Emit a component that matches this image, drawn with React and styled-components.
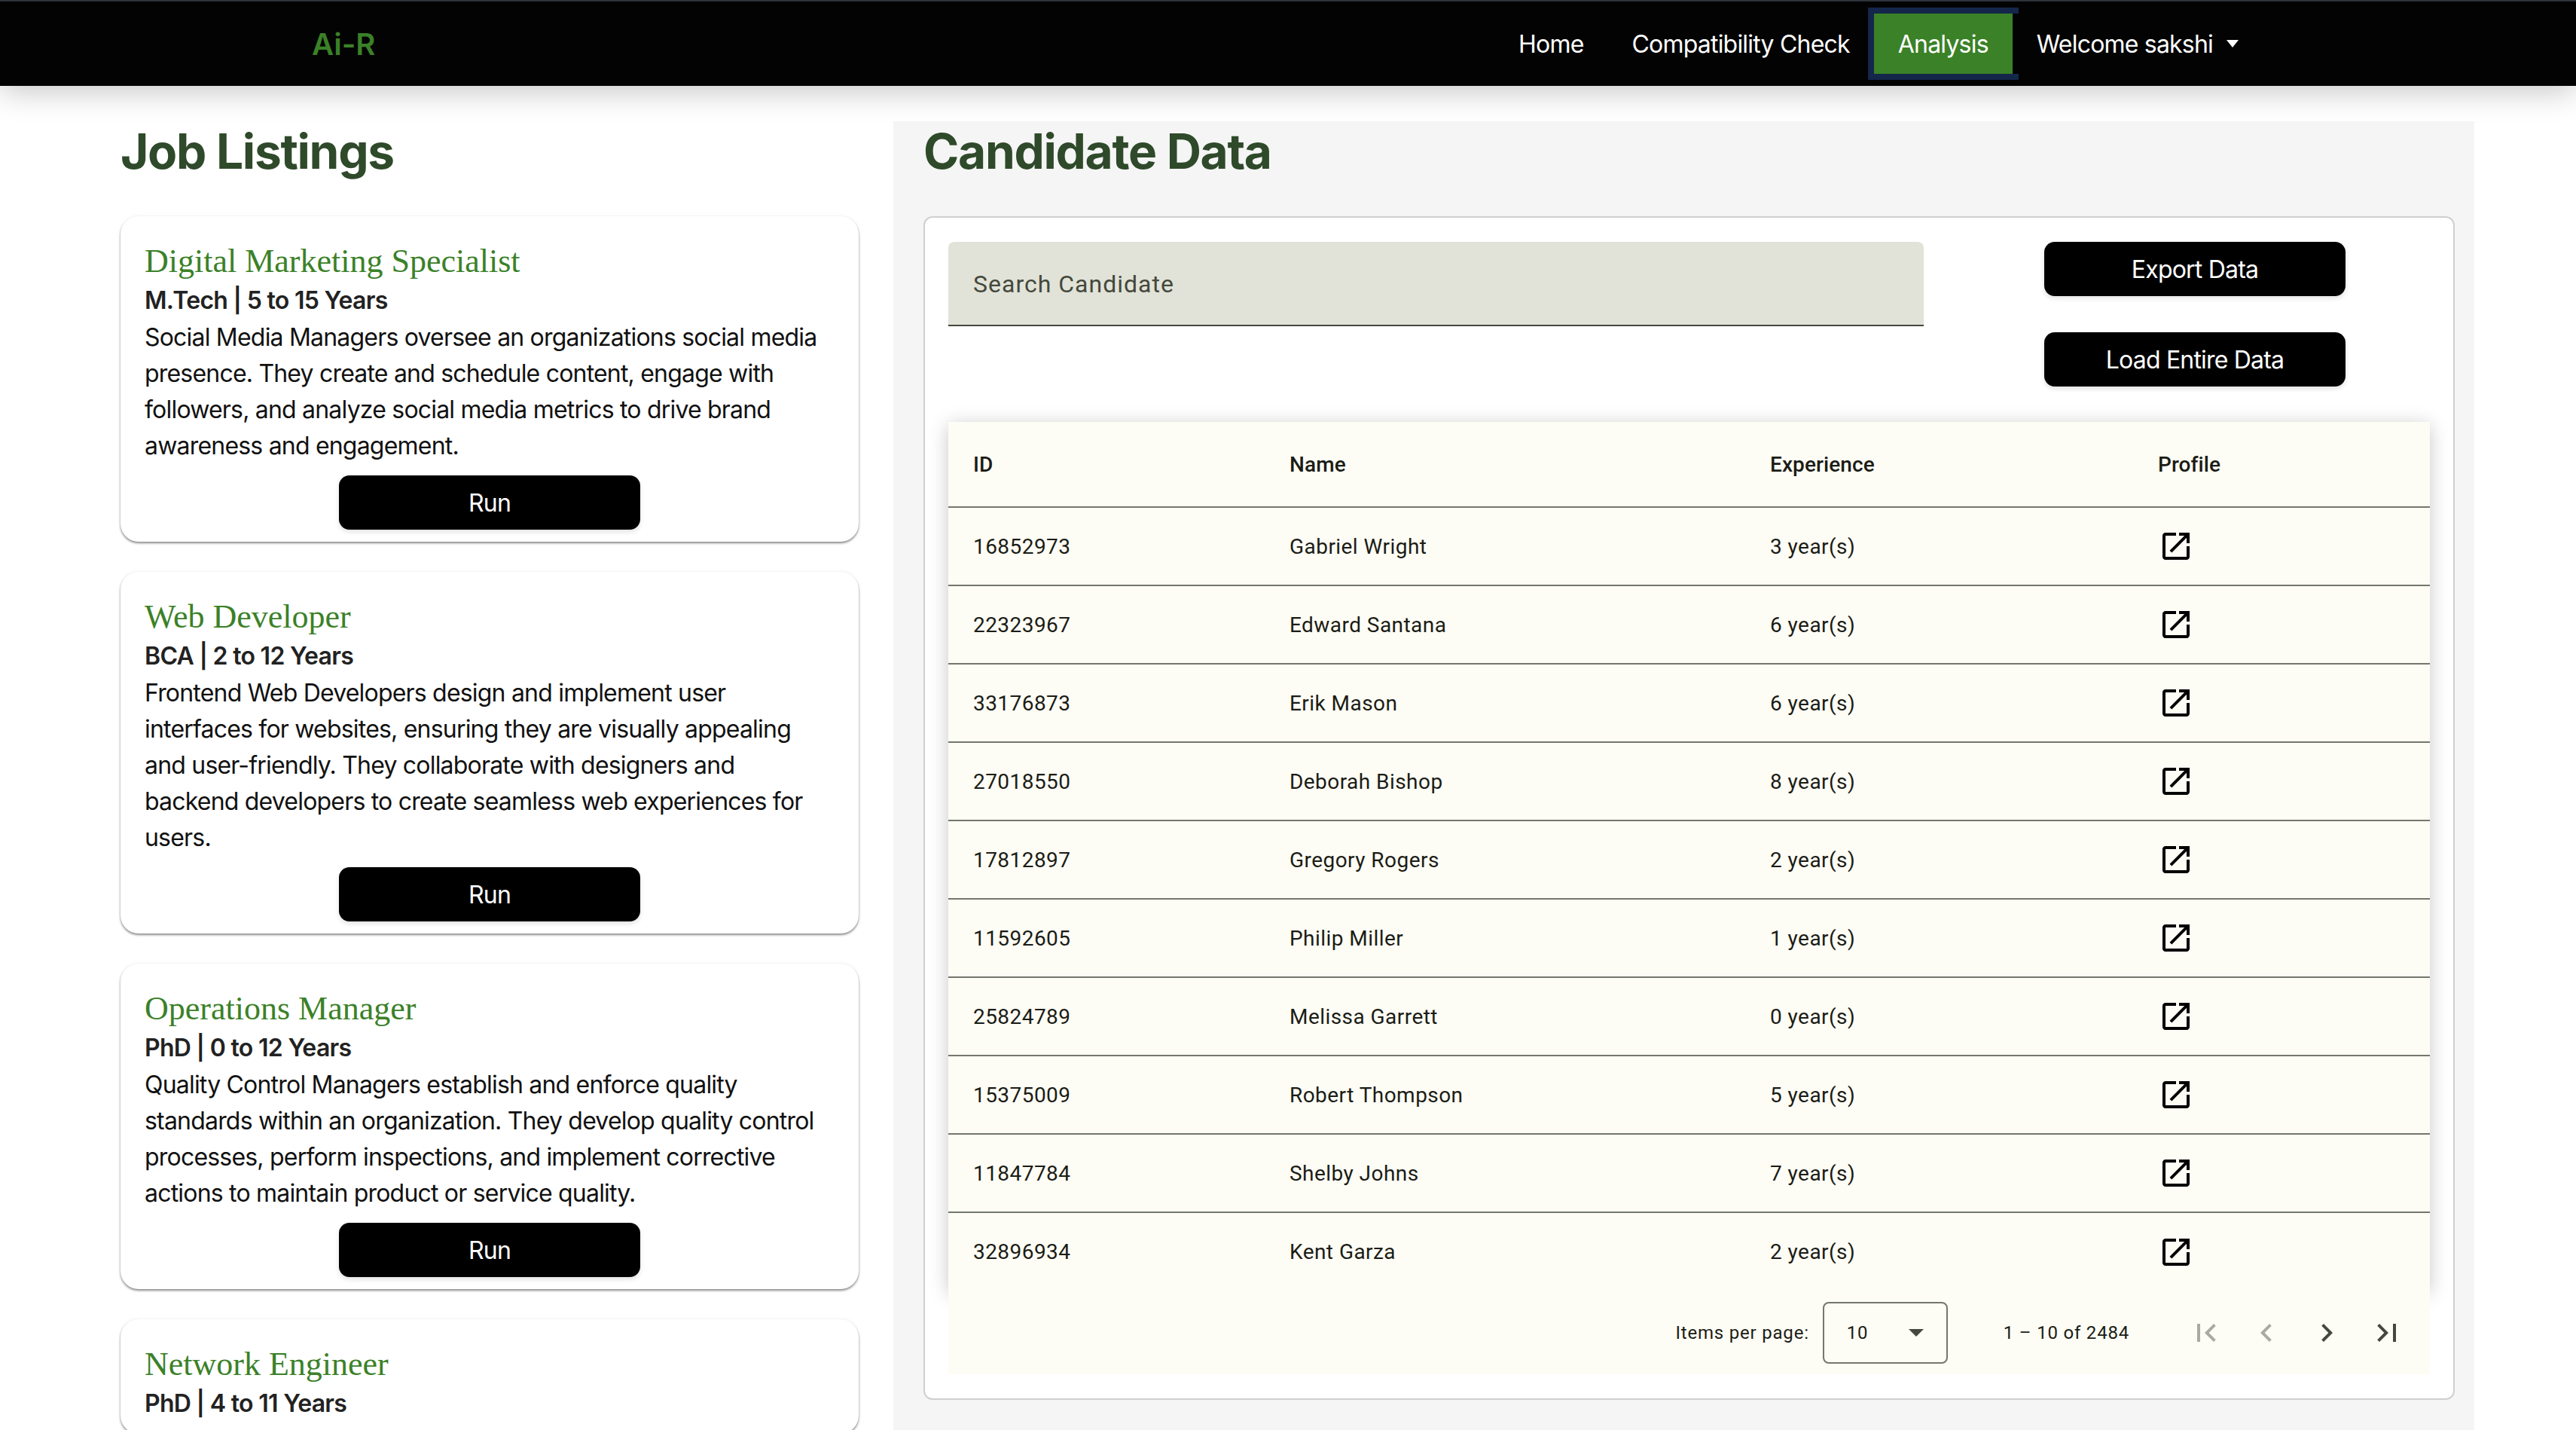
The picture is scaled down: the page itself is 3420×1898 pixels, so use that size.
import React from "react";
import styled, { createGlobalStyle } from "styled-components";

const GlobalStyle = createGlobalStyle`
  html, body {
    margin: 0;
    padding: 0;
    background: #fff;
    font-family: Inter, "Liberation Sans", sans-serif;
  }
  * {
    box-sizing: border-box;
  }
`;

const Page = styled.div`
  width: 3420px;
  height: 1898px;
  overflow: hidden;
  display: flex;
  flex-direction: column;
`;

const Navbar = styled.nav`
  height: 114px;
  flex: none;
  position: relative;
  z-index: 5;
  display: flex;
  align-items: center;
  justify-content: space-between;
  padding: 0 416px 0 414px;
  background: #030303;
  border-top: 2px solid #2e333b;
  box-shadow: 0 8px 40px rgba(0, 0, 0, 0.22);
`;

const Brand = styled.a`
  color: #3b8128;
  font-size: 40px;
  font-weight: 600;
`;

const NavLinks = styled.div`
  display: flex;
  align-items: center;
`;

/* the link after the active one sits on top and hides the right edge of the outline */
const NavLink = styled.a`
  position: relative;
  height: 80px;
  display: flex;
  align-items: center;
  padding: 0 32px;
  color: #fff;
  font-size: 32px;
  letter-spacing: -0.8px;
  background: ${props => (props.$active ? "#3b8128" : "#030303")};
  outline: ${props => (props.$active ? "8px solid #14264a" : "none")};
`;

const Caret = styled.span`
  margin-left: 18px;
  width: 0;
  height: 0;
  border-top: 10px solid #fff;
  border-left: 8px solid transparent;
  border-right: 8px solid transparent;
`;

const Main = styled.main`
  flex: 1;
  min-height: 0;
  display: flex;
  gap: 46px;
  padding: 47px 0 0 160px;
`;

const JobColumn = styled.section`
  width: 980px;
  flex: none;
`;

const Heading = styled.h1`
  margin: 0 0 46px;
  color: #2f4a2a;
  font-size: 64px;
  line-height: 80px;
  font-weight: 700;
  letter-spacing: -1.3px;
`;

const JobList = styled.div`
  display: flex;
  flex-direction: column;
  gap: 40px;
`;

const JobCard = styled.article`
  padding: 32px 32px 16px;
  border-radius: 24px;
  background: #fff;
  box-shadow: 0 2px 3px rgba(0, 0, 0, 0.45), 0 0 6px rgba(0, 0, 0, 0.05);
`;

const JobTitle = styled.h2`
  margin: 0;
  color: #3b8128;
  font-family: "Liberation Serif", serif;
  font-size: 44px;
  line-height: 56px;
  font-weight: 400;
`;

const JobMeta = styled.div`
  color: #222;
  font-size: 32px;
  line-height: 48px;
  font-weight: 600;
  letter-spacing: -0.7px;
`;

const JobText = styled.p`
  max-width: 905px;
  margin: 0 0 15px;
  padding-top: 1px;
  color: #111;
  font-size: 32px;
  line-height: 48px;
  letter-spacing: -0.8px;
`;

const BlackButton = styled.button`
  display: block;
  width: 400px;
  height: 72px;
  margin: ${props => (props.$centered ? "0 auto" : "0")};
  border: 0;
  border-radius: 14px;
  background: #000;
  color: #fff;
  font-family: Inter, "Liberation Sans", sans-serif;
  font-size: 32px;
  letter-spacing: -0.8px;
  box-shadow: 0 3px 6px rgba(0, 0, 0, 0.12);
`;

const DataPanel = styled.section`
  width: 2099px;
  flex: none;
  padding: 0 26px 0 40px;
  background: #f5f5f5;
`;

const DataCard = styled.div`
  height: 1571px;
  padding: 32px 31px;
  border: 2px solid #cfcfcf;
  border-radius: 12px;
  background: #fff;
`;

const Toolbar = styled.div`
  height: 239px;
  display: flex;
  align-items: flex-start;
`;

const SearchBox = styled.div`
  width: 1295px;
  height: 112px;
  display: flex;
  align-items: center;
  padding: 2px 33px 0;
  border-bottom: 2px solid #45483c;
  border-radius: 8px 8px 0 0;
  background: #e1e3d8;
  color: #45483c;
  font-family: Roboto, sans-serif;
  font-size: 32px;
  letter-spacing: 1px;
`;

const ToolbarButtons = styled.div`
  margin-left: 160px;
  display: flex;
  flex-direction: column;
  gap: 48px;
`;

const TableWrap = styled.div`
  background: #fdfcf5;
  box-shadow: 0 4px 24px rgba(0, 0, 0, 0.22);
`;

const Row = styled.div`
  height: ${props => (props.$header ? "114px" : props.$last ? "103px" : "104px")};
  display: grid;
  grid-template-columns: 420px 638px 515px 1fr;
  align-items: center;
  border-bottom: ${props => (props.$last ? "none" : "2px solid #74776b")};
  color: #1b1c15;
  font-family: Roboto, sans-serif;
  font-size: 28px;
  font-weight: ${props => (props.$header ? 500 : 400)};
  letter-spacing: ${props => (props.$header ? "0.1px" : "0.45px")};
`;

const Cell = styled.div`
  padding-left: 33px;
`;

const ProfileIcon = styled.svg`
  display: block;
  width: 48px;
  height: 48px;
  fill: #000;
`;

const Paginator = styled.div`
  position: relative;
  height: 111px;
  display: flex;
  align-items: center;
  justify-content: flex-end;
  padding-right: 17px;
  background: #fdfcf5;
  color: #1b1c15;
  font-family: Roboto, sans-serif;
  font-size: 24px;
  letter-spacing: 0.8px;
`;

const PageSize = styled.div`
  width: 166px;
  height: 82px;
  margin-left: 18px;
  padding: 0 30px;
  display: flex;
  align-items: center;
  justify-content: space-between;
  border: 2px solid #74776b;
  border-radius: 8px;
`;

const SelectArrow = styled.span`
  width: 0;
  height: 0;
  border-top: 10px solid #45483c;
  border-left: 10px solid transparent;
  border-right: 10px solid transparent;
`;

const RangeLabel = styled.div`
  margin: 0 62px 0 74px;
`;

const PageButton = styled.div`
  width: 80px;
  height: 80px;
  display: flex;
  align-items: center;
  justify-content: center;
`;

const PageIcon = styled.svg`
  width: 48px;
  height: 48px;
  fill: ${props => (props.$disabled ? "#a9aaa3" : "#45483c")};
`;

const jobs = [
  {
    title: "Digital Marketing Specialist",
    meta: "M.Tech | 5 to 15 Years",
    text: "Social Media Managers oversee an organizations social media presence. They create and schedule content, engage with followers, and analyze social media metrics to drive brand awareness and engagement."
  },
  {
    title: "Web Developer",
    meta: "BCA | 2 to 12 Years",
    text: "Frontend Web Developers design and implement user interfaces for websites, ensuring they are visually appealing and user-friendly. They collaborate with designers and backend developers to create seamless web experiences for users."
  },
  {
    title: "Operations Manager",
    meta: "PhD | 0 to 12 Years",
    text: "Quality Control Managers establish and enforce quality standards within an organization. They develop quality control processes, perform inspections, and implement corrective actions to maintain product or service quality."
  },
  {
    title: "Network Engineer",
    meta: "PhD | 4 to 11 Years"
  }
];

const candidates = [
  ["16852973", "Gabriel Wright", "3 year(s)"],
  ["22323967", "Edward Santana", "6 year(s)"],
  ["33176873", "Erik Mason", "6 year(s)"],
  ["27018550", "Deborah Bishop", "8 year(s)"],
  ["17812897", "Gregory Rogers", "2 year(s)"],
  ["11592605", "Philip Miller", "1 year(s)"],
  ["25824789", "Melissa Garrett", "0 year(s)"],
  ["15375009", "Robert Thompson", "5 year(s)"],
  ["11847784", "Shelby Johns", "7 year(s)"],
  ["32896934", "Kent Garza", "2 year(s)"]
];

const pageIcons = [
  { d: "M18.41 16.59 13.82 12l4.59-4.59L17 6l-6 6 6 6zM6 6h2v12H6z", disabled: true },
  { d: "M15.41 7.41 14 6l-6 6 6 6 1.41-1.41L10.83 12z", disabled: true },
  { d: "M10 6 8.59 7.41 13.17 12l-4.58 4.59L10 18l6-6z" },
  { d: "M5.59 7.41 10.18 12l-4.59 4.59L7 18l6-6-6-6zM16 6h2v12h-2z" }
];

export default function App() {
  return (
    <Page>
      <GlobalStyle />
      <Navbar>
        <Brand>Ai-R</Brand>
        <NavLinks>
          <NavLink>Home</NavLink>
          <NavLink>Compatibility Check</NavLink>
          <NavLink $active>Analysis</NavLink>
          <NavLink>
            Welcome sakshi
            <Caret />
          </NavLink>
        </NavLinks>
      </Navbar>
      <Main>
        <JobColumn>
          <Heading>Job Listings</Heading>
          <JobList>
            {jobs.map(job => (
              <JobCard key={job.title}>
                <JobTitle>{job.title}</JobTitle>
                <JobMeta>{job.meta}</JobMeta>
                {job.text && <JobText>{job.text}</JobText>}
                {job.text && <BlackButton $centered>Run</BlackButton>}
              </JobCard>
            ))}
          </JobList>
        </JobColumn>
        <DataPanel>
          <Heading>Candidate Data</Heading>
          <DataCard>
            <Toolbar>
              <SearchBox>Search Candidate</SearchBox>
              <ToolbarButtons>
                <BlackButton>Export Data</BlackButton>
                <BlackButton>Load Entire Data</BlackButton>
              </ToolbarButtons>
            </Toolbar>
            <TableWrap>
              <Row $header>
                <Cell>ID</Cell>
                <Cell>Name</Cell>
                <Cell>Experience</Cell>
                <Cell>Profile</Cell>
              </Row>
              {candidates.map((c, i) => (
                <Row key={c[0]} $last={i === candidates.length - 1}>
                  <Cell>{c[0]}</Cell>
                  <Cell>{c[1]}</Cell>
                  <Cell>{c[2]}</Cell>
                  <Cell>
                    <ProfileIcon viewBox="0 0 24 24">
                      <path d="M19 19H5V5h7V3H5c-1.11 0-2 .9-2 2v14c0 1.1.89 2 2 2h14c1.1 0 2-.9 2-2v-7h-2v7zM14 3v2h3.59l-9.83 9.83 1.41 1.41L19 6.41V10h2V3h-7z" />
                    </ProfileIcon>
                  </Cell>
                </Row>
              ))}
            </TableWrap>
            <Paginator>
              <div>Items per page:</div>
              <PageSize>
                10
                <SelectArrow />
              </PageSize>
              <RangeLabel>1 – 10 of 2484</RangeLabel>
              {pageIcons.map(icon => (
                <PageButton key={icon.d}>
                  <PageIcon viewBox="0 0 24 24" $disabled={icon.disabled}>
                    <path d={icon.d} />
                  </PageIcon>
                </PageButton>
              ))}
            </Paginator>
          </DataCard>
        </DataPanel>
      </Main>
    </Page>
  );
}
